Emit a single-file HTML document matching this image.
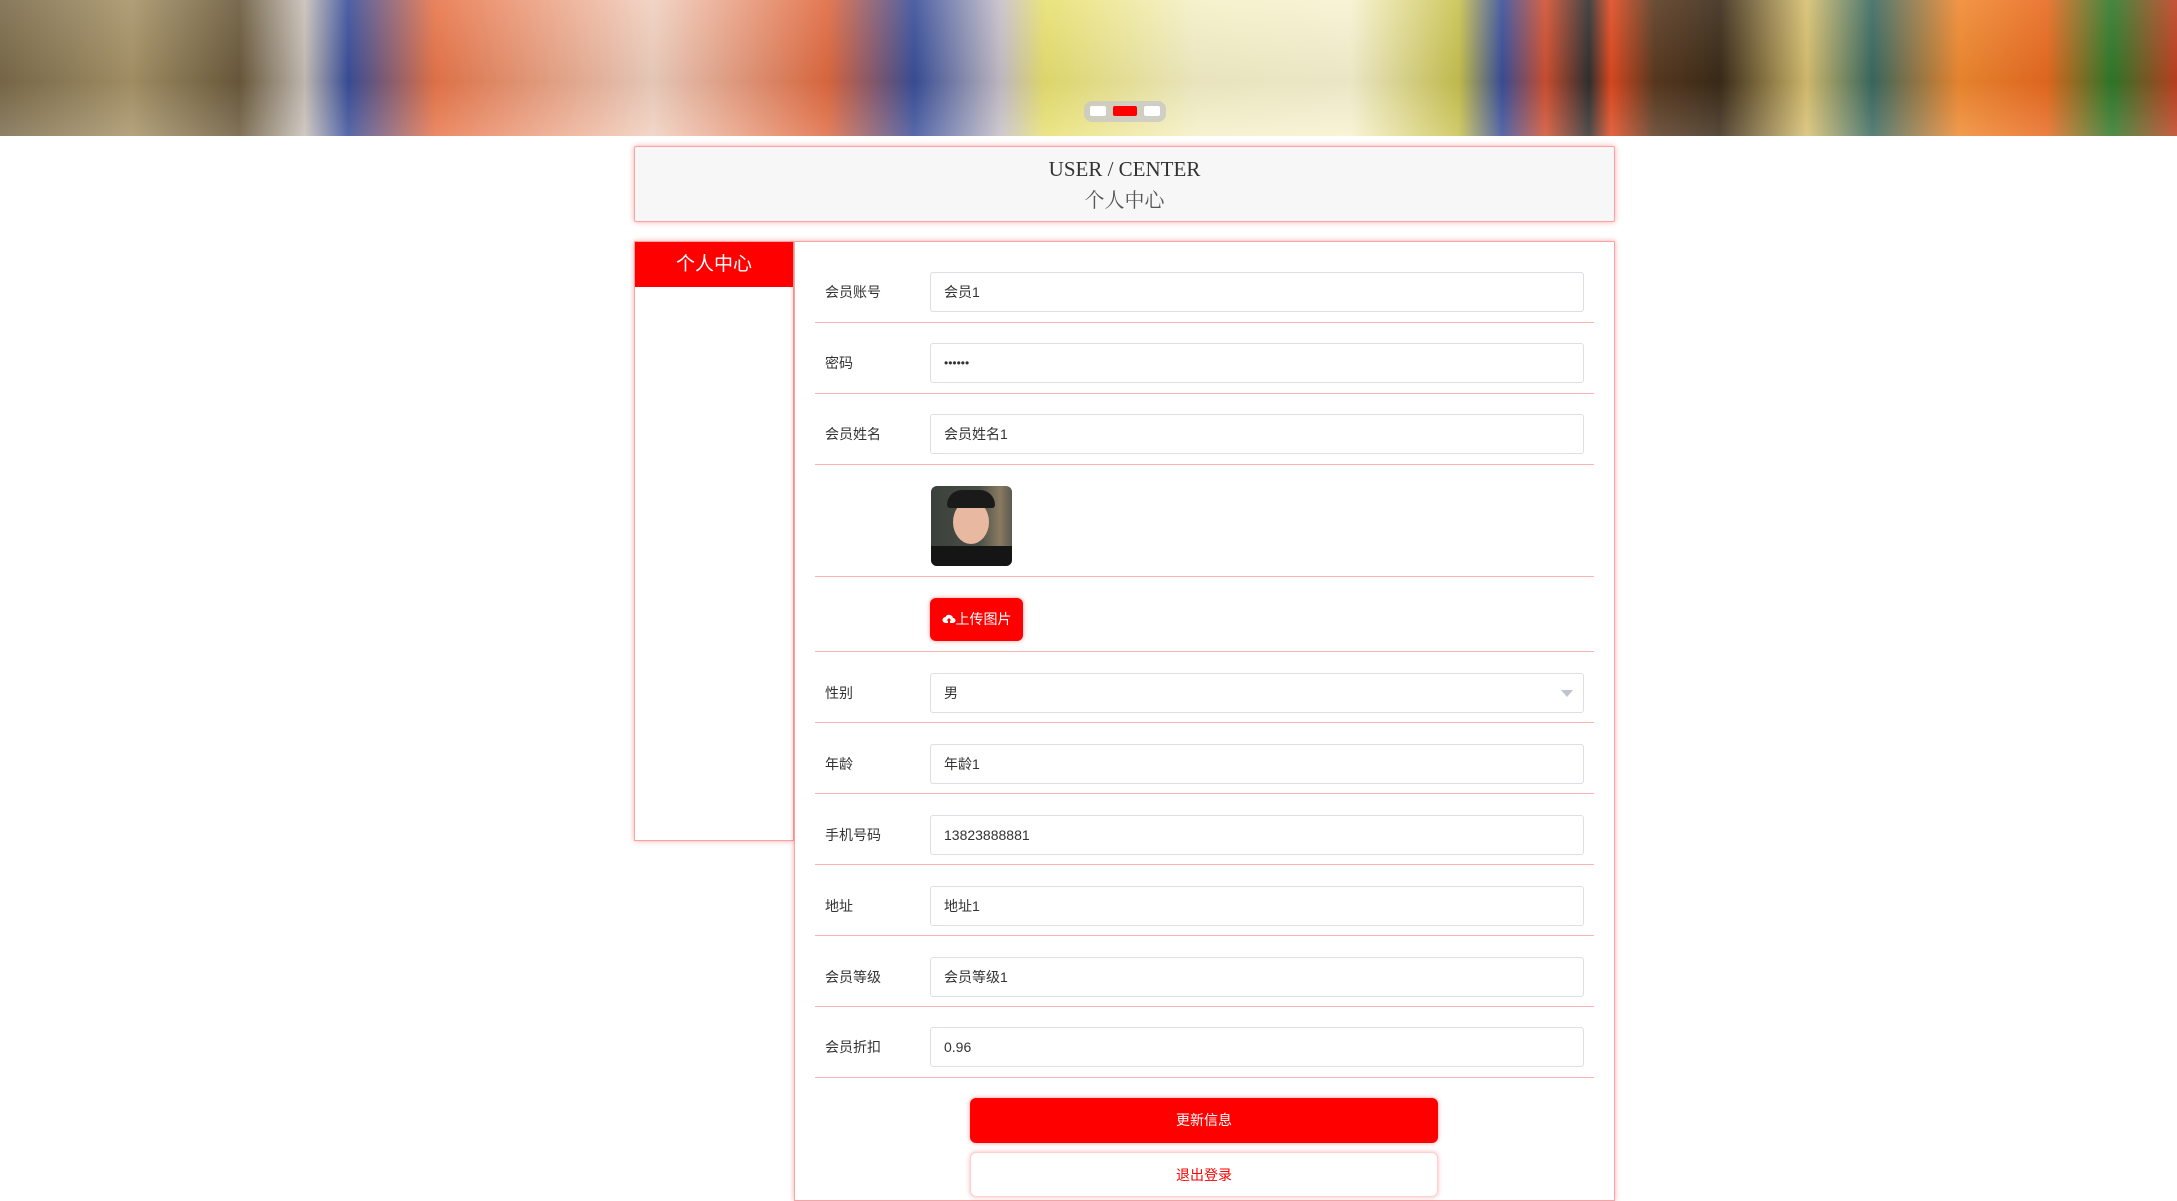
<!DOCTYPE html>
<html><head><meta charset="utf-8"><style>
*{box-sizing:border-box;margin:0;padding:0}
body{width:2177px;height:1187px;overflow:hidden;background:#fff;font-family:"Liberation Sans","Noto Sans CJK SC",sans-serif;position:relative}
.banner{position:absolute;left:0;top:0;width:2177px;height:136px;
background:
linear-gradient(180deg,rgba(255,255,255,0) 0%,rgba(255,255,255,0) 100%),
linear-gradient(90deg,#7a6a4a 0%,#a89468 6%,#6b5a3c 11%,#c8c0b8 14%,#3a4f9a 16%,#e8764a 20%,#f0d0c0 30%,#e06a40 38%,#3a4f9a 42%,#c7c0c8 46%,#e8e070 48%,#f5f0c8 55%,#f7f2d0 62%,#c9c250 67%,#3a4f9a 69%,#d05030 71%,#303030 73%,#e04a20 74%,#5a3a20 76%,#3a2a18 79%,#d8c070 83%,#3a6a60 86%,#f08a30 90%,#e86a20 94%,#2e7a2a 97%,#c04020 100%);}
.banner:after{content:"";position:absolute;left:0;right:0;top:0;height:136px;background:linear-gradient(180deg,rgba(255,255,255,.1),rgba(0,0,0,.05) 60%,rgba(255,255,255,.15))}
.dots{position:absolute;left:1084px;top:101px;width:82px;height:21px;border-radius:8px;background:rgba(200,200,200,.8);z-index:2}
.dots i{position:absolute;top:5px;height:10px;border-radius:2px;background:#fff}
.hdr{position:absolute;left:634px;top:146px;width:981px;height:76px;background:#f7f7f7;border:1px solid #f5a5a5;box-shadow:0 0 6px rgba(255,0,0,.35);border-radius:2px;text-align:center;font-family:"Liberation Serif","Noto Serif CJK SC",serif;color:#333}
.hdr .a{position:absolute;top:10px;left:0;right:0;font-size:21px}
.hdr .b{position:absolute;top:37px;left:0;right:0;font-size:20px;color:#555}
.side{position:absolute;left:634px;top:241px;width:160px;height:600px;border:1px solid #f5a5a5;box-shadow:0 0 5px rgba(255,0,0,.35);background:#fff}
.side .t{height:45px;background:#f00;color:#fff;font-size:19px;text-align:center;line-height:45px}
.main{position:absolute;left:794px;top:241px;width:821px;height:960px;border:1px solid #f5a5a5;box-shadow:0 0 5px rgba(255,0,0,.35);background:#fff}
.lbl{position:absolute;left:825px;font-size:14px;color:#333}
.inp{position:absolute;left:930px;width:654px;height:40px;border:1px solid #dcdfe6;border-radius:3px;font-size:14px;color:#333;padding-left:13px;line-height:38px;background:#fff}
.sep{position:absolute;left:815px;width:779px;height:1px;background:#f8b4b4}
.btn{position:absolute;border-radius:6px;text-align:center;font-size:14px}
</style></head><body>
<div class="banner"></div>
<div class="dots"><i style="left:6px;width:16px"></i><i style="left:29px;width:24px;background:#f00"></i><i style="left:60px;width:16px"></i></div>
<div class="hdr"><div class="a">USER / CENTER</div><div class="b">个人中心</div></div>
<div class="side"><div class="t">个人中心</div></div>
<div class="main"></div>

<div class="lbl" style="top:282px">会员账号</div><div class="inp" style="top:272px">会员1</div><div class="sep" style="top:322px"></div>
<div class="lbl" style="top:353px">密码</div><div class="inp" style="top:343px;font-size:12px">••••••</div><div class="sep" style="top:393px"></div>
<div class="lbl" style="top:424px">会员姓名</div><div class="inp" style="top:414px">会员姓名1</div><div class="sep" style="top:464px"></div>
<div style="position:absolute;left:931px;top:486px;width:81px;height:80px;border-radius:6px;background:linear-gradient(90deg,#3a403a,#4a5048 60%,#8a7a60 85%,#5a5a50);overflow:hidden"><div style="position:absolute;left:22px;top:14px;width:36px;height:44px;border-radius:50%;background:#e8b8a0"></div><div style="position:absolute;left:16px;top:4px;width:48px;height:18px;border-radius:20px 20px 4px 4px;background:#1a1a1a"></div><div style="position:absolute;left:0;top:60px;width:81px;height:20px;background:#151515"></div></div>
<div class="sep" style="top:576px"></div>
<div class="btn" style="left:930px;top:598px;width:93px;height:43px;background:#f00;color:#fff;line-height:43px;box-shadow:0 0 5px rgba(255,0,0,.4);font-size:14px"><svg width="14" height="12" viewBox="0 0 14 12" style="vertical-align:-1px"><path d="M3.5 10a3 3 0 0 1 0-6 4 4 0 0 1 7.5 1 2.5 2.5 0 0 1 0 5H8V7.5h1.5L7 5 4.5 7.5H6V10z" fill="#fff"/></svg>上传图片</div>
<div class="sep" style="top:651px"></div>
<div class="lbl" style="top:683px">性别</div><div class="inp" style="top:673px">男<span style="position:absolute;right:10px;top:16px;width:0;height:0;border-left:6px solid transparent;border-right:6px solid transparent;border-top:7px solid #c0c4cc"></span></div><div class="sep" style="top:722px"></div>
<div class="lbl" style="top:754px">年龄</div><div class="inp" style="top:744px">年龄1</div><div class="sep" style="top:793px"></div>
<div class="lbl" style="top:825px">手机号码</div><div class="inp" style="top:815px">13823888881</div><div class="sep" style="top:864px"></div>
<div class="lbl" style="top:896px">地址</div><div class="inp" style="top:886px">地址1</div><div class="sep" style="top:935px"></div>
<div class="lbl" style="top:967px">会员等级</div><div class="inp" style="top:957px">会员等级1</div><div class="sep" style="top:1006px"></div>
<div class="lbl" style="top:1037px">会员折扣</div><div class="inp" style="top:1027px">0.96</div><div class="sep" style="top:1077px"></div>
<div class="btn" style="left:970px;top:1098px;width:468px;height:45px;background:#f00;color:#fff;line-height:45px;box-shadow:0 0 5px rgba(255,0,0,.4)">更新信息</div>
<div class="btn" style="left:970px;top:1152px;width:468px;height:45px;background:#fff;color:#f00;line-height:45px;border:1px solid #fbd0d0;box-shadow:0 0 5px rgba(255,0,0,.3)">退出登录</div>
</body></html>
